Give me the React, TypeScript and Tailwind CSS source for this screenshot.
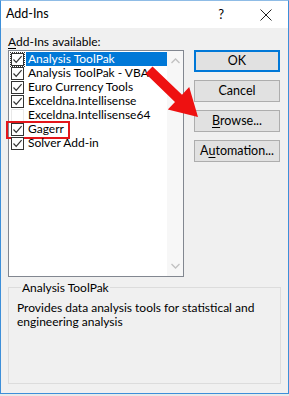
import type { ReactNode } from "react";

const FONT = { fontFamily: 'Lato, "Liberation Sans", sans-serif' };

type Item = { label: string; checked: boolean; selected?: boolean; focus?: boolean; marked?: boolean };

const ITEMS: Item[] = [
  { label: "Analysis ToolPak", checked: true, selected: true, focus: true },
  { label: "Analysis ToolPak - VBA", checked: true },
  { label: "Euro Currency Tools", checked: true },
  { label: "Exceldna.Intellisense", checked: true },
  { label: "Exceldna.Intellisense64", checked: false },
  { label: "Gagerr", checked: true, marked: true },
  { label: "Solver Add-in", checked: true },
];

function CheckBox(props: { checked: boolean }) {
  return (
    <span
      className={
        props.checked
          ? "flex h-[13px] w-[13px] items-center justify-center border border-[#333333] bg-white"
          : "flex h-[13px] w-[13px] items-center justify-center border border-[#e8e8e8] bg-white"
      }
    >
      {props.checked ? (
        <svg width="11" height="11" viewBox="0 0 11 11" fill="none">
          <path d="M1.5 5.5 L4.2 8.3 L9.6 2.2" stroke="#333333" strokeWidth="1.2" />
        </svg>
      ) : null}
    </span>
  );
}

function Button(props: { children: ReactNode; primary?: boolean }) {
  return (
    <div
      className={
        props.primary
          ? "flex h-[22px] w-[86px] items-center justify-center border-2 border-[#0078d7] bg-[#e1e1e1] text-[12.5px] text-black"
          : "flex h-[22px] w-[86px] items-center justify-center border border-[#adadad] bg-[#e1e1e1] text-[12.5px] text-black"
      }
    >
      {props.children}
    </div>
  );
}

function Row({ item }: { item: Item }) {
  return (
    <div className="relative flex h-[14px] items-center">
      <div
        className={
          item.focus
            ? "flex h-[15px] w-[15px] items-center justify-center border border-dotted border-[#333333]"
            : "flex h-[15px] w-[15px] items-center justify-center"
        }
      >
        <CheckBox checked={item.checked} />
      </div>
      <div
        className={
          item.selected
            ? "ml-[1px] flex h-[14px] flex-1 items-center bg-[#0078d7] pl-[2px] text-[12px] leading-none text-white"
            : "ml-[1px] flex h-[14px] flex-1 items-center pl-[2px] text-[12px] leading-none text-black"
        }
      >
        {item.label}
      </div>
      {item.marked ? (
        <div className="pointer-events-none absolute left-[-4px] top-[-1px] h-[18px] w-[64px] border-2 border-[#e3161b]" />
      ) : null}
    </div>
  );
}

export default function App() {
  return (
    <div className="relative h-[396px] w-[289px] overflow-hidden bg-[#e9e9e9]" style={FONT}>
      <div className="flex h-[394px] flex-col border-x border-b border-t border-[#3d8fd9] border-t-[#8fbce6] bg-[#f0f0f0]">
        {/* title bar */}
        <div className="flex h-[27px] items-center bg-white pl-[5px] text-[12.5px] text-black">
          <span>Add-Ins</span>
          <span className="ml-auto mr-[36px] text-[13px]">?</span>
          <svg className="mr-[16px]" width="12" height="12" viewBox="0 0 12 12">
            <path d="M0.5 0.5 L11.5 11.5 M11.5 0.5 L0.5 11.5" stroke="#222222" strokeWidth="1" />
          </svg>
        </div>

        {/* body */}
        <div className="flex flex-1 flex-col px-[7px] pb-[9px] pt-[5px]">
          <div className="h-[17px] text-[12px] leading-[17px] text-black">
            <span className="underline underline-offset-2">A</span>dd-Ins available:
          </div>

          <div className="flex gap-[10px]">
            <div className="flex h-[227px] w-[176px] border border-[#828790] bg-white">
              <div className="flex flex-1 flex-col pl-[1px] pt-[1px]">
                {ITEMS.map((it) => (
                  <Row key={it.label} item={it} />
                ))}
              </div>
              <div className="flex w-[16px] flex-col items-center justify-between bg-[#f7f7f7] py-[7px]">
                <svg width="9" height="6" viewBox="0 0 9 6">
                  <path d="M0.5 5 L4.5 1 L8.5 5" stroke="#c2c2c2" strokeWidth="1.3" fill="none" />
                </svg>
                <svg width="9" height="6" viewBox="0 0 9 6">
                  <path d="M0.5 1 L4.5 5 L8.5 1" stroke="#c2c2c2" strokeWidth="1.3" fill="none" />
                </svg>
              </div>
            </div>

            <div className="flex flex-col gap-[8px]">
              <Button primary>OK</Button>
              <Button>Cancel</Button>
              <Button>
                <span className="underline underline-offset-2">B</span>rowse...
              </Button>
              <Button>
                A<span className="underline underline-offset-2">u</span>tomation...
              </Button>
            </div>
          </div>

          {/* group box */}
          <div className="mt-[10px] flex flex-1 flex-col border border-[#dcdcdc] px-[8px]">
            <div className="ml-[4px] -mt-[8px] self-start bg-[#f0f0f0] px-[1px] text-[12px] leading-[16px] text-black">
              Analysis ToolPak
            </div>
            <p className="mt-[5px] text-[12px] leading-[14px] text-black">
              Provides data analysis tools for statistical and engineering analysis
            </p>
          </div>
        </div>
      </div>

      {/* red annotation arrow */}
      <svg className="pointer-events-none absolute left-0 top-0" width="289" height="396" viewBox="0 0 289 396">
        <polygon
          points="152.5,66.4 182,94.7 189.2,87.1 198,117 167.8,109.5 175,101.9 145.5,73.6"
          fill="#ee1111"
        />
      </svg>
    </div>
  );
}
